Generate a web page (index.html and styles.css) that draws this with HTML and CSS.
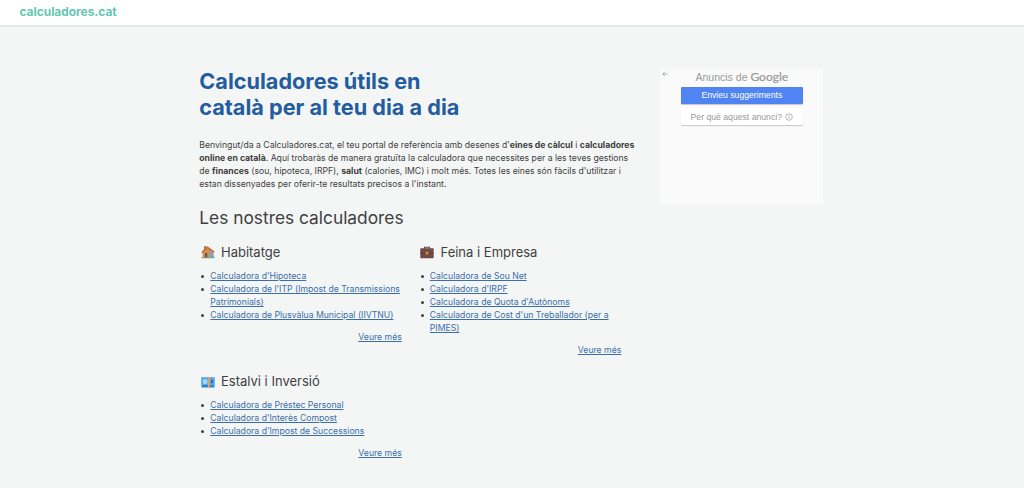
FILE: index.html
```
<!DOCTYPE html>
<html lang="ca">
<head>
    <meta charset="UTF-8">
    <meta name="viewport" content="width=device-width, initial-scale=1.0">
    <title>Calculadores.cat</title>
    <link rel="stylesheet" href="styles.css">
</head>
<body>
    <header class="header">
        <a class="logo" href="#">calculadores.cat</a>
    </header>
    <div class="container">
        <main class="content">
            <h1>Calculadores útils en<br>català per al teu dia a dia</h1>
            <p class="intro">Benvingut/da a Calculadores.cat, el teu portal de referència amb desenes d'<strong>eines de càlcul</strong> i <strong>calculadores<br>online en català</strong>. Aquí trobaràs de manera gratuïta la calculadora que necessites per a les teves gestions<br>de <strong>finances</strong> (sou, hipoteca, IRPF), <strong>salut</strong> (calories, IMC) i molt més. Totes les eines són fàcils d'utilitzar i<br>estan dissenyades per oferir-te resultats precisos a l'instant.</p>
            <h2>Les nostres calculadores</h2>
            <div class="categories">
                <section class="category">
                    <h3>
                        <svg class="icon" viewBox="0 0 14 14">
                            <path d="M0.500 12h13v1.300h-13z" fill="#5fb8a8"/>
                            <path d="M3 1h1.800v4H3z" fill="#b0764c"/>
                            <path d="M1.500 6.500L6 2.500l6.500 4v6h-11z" fill="#cf9058"/>
                            <path d="M0.300 7.200L6 1 13.700 6.500 12.700 7.700 6.400 3.300 1.400 8.200z" fill="#b8733f"/>
                            <path d="M4 8h2.300v4.500H4z" fill="#7a5242"/>
                            <path d="M8.500 6.800h2.900v3.200H8.500z" fill="#6aa9ea"/>
                            <path d="M9.500 10.500h3.500v2H9.500z" fill="#5fb0dd"/>
                        </svg>
                        Habitatge
                    </h3>
                    <ul>
                        <li><a href="#">Calculadora d'Hipoteca</a></li>
                        <li><a href="#">Calculadora de l'ITP (Impost de Transmissions<br>Patrimonials)</a></li>
                        <li><a href="#">Calculadora de Plusvàlua Municipal (IIVTNU)</a></li>
                    </ul>
                    <a class="more" href="#">Veure més</a>
                </section>
                <section class="category">
                    <h3>
                        <svg class="icon" viewBox="0 0 14 14">
                            <path d="M4.500 4V2.200h5V4" fill="none" stroke="#5b4a48" stroke-width="1.100"/>
                            <rect x="0.300" y="3.300" width="13.400" height="10" rx="0.900" fill="#6f4c45"/>
                            <path d="M0.300 7.800h13.400v0.800H0.300z" fill="#5c3d38"/>
                            <rect x="5.700" y="6.700" width="2.700" height="2.900" rx="0.500" fill="#d98a3a"/>
                        </svg>
                        Feina i Empresa
                    </h3>
                    <ul>
                        <li><a href="#">Calculadora de Sou Net</a></li>
                        <li><a href="#">Calculadora d'IRPF</a></li>
                        <li><a href="#">Calculadora de Quota d'Autònoms</a></li>
                        <li><a href="#">Calculadora de Cost d'un Treballador (per a<br>PIMES)</a></li>
                    </ul>
                    <a class="more" href="#">Veure més</a>
                </section>
                <section class="category">
                    <h3>
                        <svg class="icon" viewBox="0 0 14 14">
                            <rect x="0.500" y="3.500" width="13" height="10" fill="#2f86c9"/>
                            <rect x="0.500" y="3.500" width="13" height="7.500" fill="#57a9e6"/>
                            <ellipse cx="4.200" cy="7.500" rx="2.400" ry="2.600" fill="#a5d6f7"/>
                            <path d="M10 5.700h2v3.500h-2z" fill="#2a74b8"/>
                            <path d="M7 3.500h2v10H7z" fill="#d9a06c"/>
                        </svg>
                        Estalvi i Inversió
                    </h3>
                    <ul>
                        <li><a href="#">Calculadora de Préstec Personal</a></li>
                        <li><a href="#">Calculadora d'Interès Compost</a></li>
                        <li><a href="#">Calculadora d'Impost de Successions</a></li>
                    </ul>
                    <a class="more" href="#">Veure més</a>
                </section>
            </div>
        </main>
        <aside class="ad">
            <svg class="ad-back" viewBox="0 0 6 6">
                <path d="M5.700 3H0.700M3 0.700L0.700 3 3 5.300" fill="none" stroke="#999" stroke-width="0.800"/>
            </svg>
            <div class="ad-title">Anuncis de <span class="google">Google</span></div>
            <button class="ad-button primary">Envieu suggeriments</button>
            <button class="ad-button">Per què aquest anunci?
                <svg class="ad-info" viewBox="0 0 8 8">
                    <circle cx="4" cy="4" r="3.300" fill="none" stroke="#999" stroke-width="0.700"/>
                    <path d="M4 3.500v2.300M4 2v0.800" stroke="#999" stroke-width="0.800"/>
                </svg>
            </button>
        </aside>
    </div>
</body>
</html>
```
FILE: styles.css
```
* {
    box-sizing: border-box;
}

body {
    font-family: Inter, sans-serif;
    font-size: 8.670px;
    line-height: 13px;
    background-color: #f4f6f5;
    color: #3f3f42;
    margin: 0;
    overflow: hidden;
}

.header {
    height: 26px;
    padding: 4px 19.500px 0;
    background-color: #fff;
    border-bottom: 1px solid #e3e5e5;
    box-shadow: 0 1px 1px rgba(0, 0, 0, 0.04);
}

.logo {
    display: block;
    color: #62c6b2;
    font-size: 11.900px;
    font-weight: 700;
    line-height: 16px;
    text-decoration: none;
}

.container {
    display: flex;
    justify-content: space-between;
    width: 624px;
    margin: 42px 0 0 199.300px;
}

.content {
    width: 442px;
    white-space: nowrap;
}

h1 {
    color: #235c9f;
    font-size: 21.670px;
    font-weight: 700;
    line-height: 26px;
    margin: 0 0 19px;
}

.intro {
    margin: 0 0 16px;
}

h2 {
    font-size: 17.330px;
    font-weight: 400;
    line-height: 22px;
    margin: 0 0 14px;
}

.categories {
    display: grid;
    grid-template-columns: 202.500px 202.500px;
    column-gap: 17px;
    row-gap: 14.500px;
    align-items: start;
}

.category {
    display: flex;
    flex-direction: column;
}

h3 {
    display: flex;
    align-items: center;
    gap: 6px;
    font-size: 13px;
    font-weight: 400;
    line-height: 18px;
    margin: 0 0 9px;
    padding-left: 1.700px;
}

.icon {
    width: 14px;
    height: 14px;
}

ul {
    margin: 0 0 9px;
    padding-left: 11px;
    list-style: none;
}

li::before {
    content: "";
    display: inline-block;
    width: 3px;
    height: 3px;
    margin: 0 6px 1px -9px;
    border-radius: 50%;
    background-color: #3f3f42;
}

a {
    color: #3a6ea9;
}

.more {
    align-self: flex-end;
}

.ad {
    position: relative;
    display: flex;
    flex-direction: column;
    align-items: center;
    width: 163px;
    height: 135px;
    margin-top: 1px;
    background-color: #fafafa;
    color: #999;
    font-family: "Liberation Sans", Arial, sans-serif;
}

.ad-back {
    position: absolute;
    left: 2px;
    top: 2px;
    width: 6px;
    height: 6px;
}

.ad-title {
    font-size: 10.500px;
    line-height: 16px;
}

.google {
    font-family: Lato, sans-serif;
    font-size: 12px;
    -webkit-text-stroke: 0.200px #999;
}

.ad-button {
    display: flex;
    align-items: center;
    justify-content: center;
    gap: 3px;
    width: 122px;
    height: 17px;
    margin: 2px 0;
    padding: 0;
    border: none;
    border-radius: 1px;
    background-color: #fff;
    box-shadow: 0 1px 1px rgba(0, 0, 0, 0.2);
    color: #999;
    font-family: inherit;
    font-size: 8.670px;
}

.primary {
    background-color: #5084f2;
    color: #fff;
    padding-bottom: 1px;
}

.ad-info {
    width: 8px;
    height: 8px;
}
```
